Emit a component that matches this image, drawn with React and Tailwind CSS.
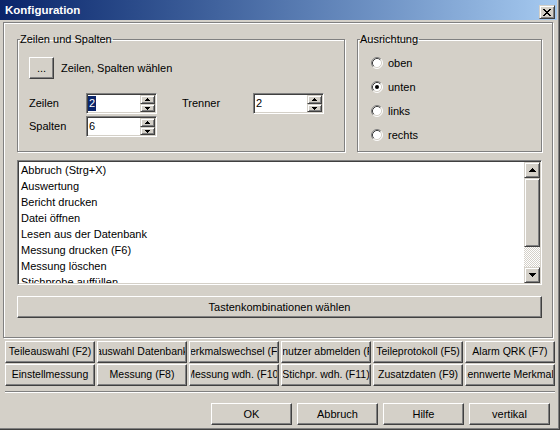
import React from 'react';

// classic win32 bevels
const raised = "border border-t-white border-l-white border-r-[#404040] border-b-[#404040] shadow-[inset_-1px_-1px_0_#808080]";
const raisedSmall = "border border-t-[#d4d0c8] border-l-[#d4d0c8] border-r-[#404040] border-b-[#404040] shadow-[inset_1px_1px_0_#fff,inset_-1px_-1px_0_#808080]";
const sunken = "border p-px border-t-[#808080] border-l-[#808080] border-r-white border-b-white shadow-[inset_1px_1px_0_#404040,inset_-1px_-1px_0_#d4d0c8]";
const etched = "border border-[#808080] shadow-[1px_1px_0_#fff,inset_1px_1px_0_#fff]";

function Arrow({ down, size = 4 }) {
  const rows = [];
  for (let i = 0; i < size; i++) {
    const y = down ? size - 1 - i : i;
    rows.push(<rect key={i} x={size - 1 - i} y={y} width={2 * i + 1} height={1} />);
  }
  return (
    <svg width={size * 2 - 1} height={size} viewBox={`0 0 ${size * 2 - 1} ${size}`} shapeRendering="crispEdges" fill="#000">
      {rows}
    </svg>
  );
}

function CloseGlyph() {
  const r = [
    [0, 0, 2], [6, 0, 2], [1, 1, 2], [5, 1, 2], [2, 2, 4], [3, 3, 2],
    [2, 4, 4], [1, 5, 2], [5, 5, 2], [0, 6, 2], [6, 6, 2],
  ];
  return (
    <svg width="8" height="7" viewBox="0 0 8 7" shapeRendering="crispEdges" fill="#000">
      {r.map(([x, y, w], i) => <rect key={i} x={x} y={y} width={w} height="1" />)}
    </svg>
  );
}

function Radio({ checked }) {
  return (
    <svg width="12" height="12" viewBox="0 0 12 12">
      <circle cx="6" cy="6" r="5" fill="#fff" />
      <path d="M2.11 9.89 A5.5 5.5 0 0 1 9.89 2.11" stroke="#808080" fill="none" />
      <path d="M9.89 2.11 A5.5 5.5 0 0 1 2.11 9.89" stroke="#fff" fill="none" />
      <path d="M2.82 9.18 A4.5 4.5 0 0 1 9.18 2.82" stroke="#404040" fill="none" />
      <path d="M9.18 2.82 A4.5 4.5 0 0 1 2.82 9.18" stroke="#d4d0c8" fill="none" />
      {checked && <circle cx="6" cy="6" r="2" fill="#000" />}
    </svg>
  );
}

function Spin({ value, selected }) {
  return (
    <div className={`w-[71px] h-[21px] flex bg-white ${sunken}`}>
      <div className="flex-1 flex items-center">
        <span className={selected ? "bg-[#0a246a] text-white px-px leading-[15px]" : "px-px leading-[15px]"}>{value}</span>
      </div>
      <div className="w-[15px] flex flex-col">
        <div className={`h-[9px] flex items-center justify-center bg-[#d4d0c8] ${raisedSmall}`}>
          <Arrow size={3} />
        </div>
        <div className={`h-[8px] flex items-center justify-center bg-[#d4d0c8] ${raisedSmall}`}>
          <Arrow size={3} down />
        </div>
      </div>
    </div>
  );
}

function FnButton({ label }) {
  return (
    <div className={`h-[22px] ${raised}`}>
      <div className="mx-px h-full flex items-center justify-center overflow-hidden whitespace-nowrap">
        <span className="shrink-0">{label}</span>
      </div>
    </div>
  );
}

const items = [
  'Abbruch (Strg+X)',
  'Auswertung',
  'Bericht drucken',
  'Datei öffnen',
  'Lesen aus der Datenbank',
  'Messung drucken (F6)',
  'Messung löschen',
  'Stichprobe auffüllen',
];

const fnRow1 = ['Teileauswahl (F2)', 'auswahl Datenbank', 'Merkmalswechsel (F3)', 'Benutzer abmelden (F4)', 'Teileprotokoll (F5)', 'Alarm QRK (F7)'];
const fnRow2 = ['Einstellmessung', 'Messung (F8)', 'Messung wdh. (F10)', 'Stichpr. wdh. (F11)', 'Zusatzdaten (F9)', 'Kennwerte Merkmale'];

export default function App() {
  return (
    <div className="w-[560px] h-[430px] overflow-hidden bg-[#d4d0c8] text-black text-[11px] font-['Liberation_Sans',Arial,sans-serif] border-r border-b border-[#404040] shadow-[inset_-1px_-1px_0_#808080]">
      {/* title bar */}
      <div className="w-[557px] h-[20px] flex items-start bg-linear-to-r from-[#0a246a] to-[#a6caf0]">
        <div className="pl-[5px] pt-[3px] text-white font-bold text-[11.5px] leading-[14px]">Konfiguration</div>
        <div className={`ml-auto mr-[2px] mt-[5px] w-[16px] h-[14px] flex items-center justify-center bg-[#d4d0c8] ${raisedSmall}`}>
          <CloseGlyph />
        </div>
      </div>

      {/* main panel */}
      <div className={`ml-[3px] mt-[2px] w-[550px] h-[316px] pt-[10px] pl-[13px] pr-[10px] ${etched}`}>
        <div className="flex h-[119px]">
          <fieldset className={`w-[328px] h-[119px] ${etched}`}>
            <legend className="ml-[2px] pr-[1px] leading-[13px]">Zeilen und Spalten</legend>
            <div className="pl-[11px] pt-[11px]">
              <div className="flex items-center">
                <div className={`w-[25px] h-[22px] flex items-center justify-center ${raised}`}>...</div>
                <span className="ml-[7px]">Zeilen, Spalten wählen</span>
              </div>
              <div className="flex items-center mt-[14px]">
                <span className="w-[57px]">Zeilen</span>
                <Spin value="2" selected />
                <span className="ml-[25px] w-[71px]">Trenner</span>
                <Spin value="2" />
              </div>
              <div className="flex items-center mt-[2px]">
                <span className="w-[57px]">Spalten</span>
                <Spin value="6" />
              </div>
            </div>
          </fieldset>

          <fieldset className={`ml-[12px] flex-1 h-[119px] ${etched}`}>
            <legend className="ml-[2px] pr-[1px] leading-[13px]">Ausrichtung</legend>
            <div className="pl-[13px] pt-[5px]">
              {[['oben', false], ['unten', true], ['links', false], ['rechts', false]].map(([l, c]) => (
                <div key={l} className="h-[24px] flex items-center">
                  <Radio checked={c} />
                  <span className="ml-[5px]">{l}</span>
                </div>
              ))}
            </div>
          </fieldset>
        </div>

        {/* list */}
        <div className={`mt-[8px] h-[125px] flex bg-white ${sunken}`}>
          <div className="flex-1 overflow-hidden">
            {items.map((t) => (
              <div key={t} className="h-[16px] leading-[16px] pl-[2px] whitespace-nowrap">{t}</div>
            ))}
          </div>
          <div className="w-[16px] flex flex-col">
            <div className={`h-[16px] flex items-center justify-center bg-[#d4d0c8] ${raisedSmall}`}>
              <Arrow />
            </div>
            <div className={`h-[69px] bg-[#d4d0c8] ${raisedSmall}`} />
            <div className="flex-1 bg-[repeating-conic-gradient(#d4d0c8_0_25%,#ffffff_0_50%)] bg-[length:2px_2px]" />
            <div className={`h-[16px] flex items-center justify-center bg-[#d4d0c8] ${raisedSmall}`}>
              <Arrow down />
            </div>
          </div>
        </div>

        <div className={`mt-[11px] h-[22px] flex items-center justify-center ${raised}`}>
          Tastenkombinationen wählen
        </div>
      </div>

      {/* function keys */}
      <div className="ml-[5px] mt-[3px] w-[550px] grid grid-cols-6 gap-x-[2px] gap-y-[1px] text-[10.5px]">
        {fnRow1.map((l) => <FnButton key={l} label={l} />)}
        {fnRow2.map((l) => <FnButton key={l} label={l} />)}
      </div>

      <div className="ml-[5px] mt-[5px] w-[550px] h-[2px] border-t border-t-[#808080] border-b border-b-white" />

      <div className="mt-[10px] pr-[9px] flex justify-end gap-[5px]">
        {['OK', 'Abbruch', 'Hilfe', 'vertikal'].map((l) => (
          <div key={l} className={`w-[81px] h-[22px] flex items-center justify-center ${raised}`}>{l}</div>
        ))}
      </div>
    </div>
  );
}
